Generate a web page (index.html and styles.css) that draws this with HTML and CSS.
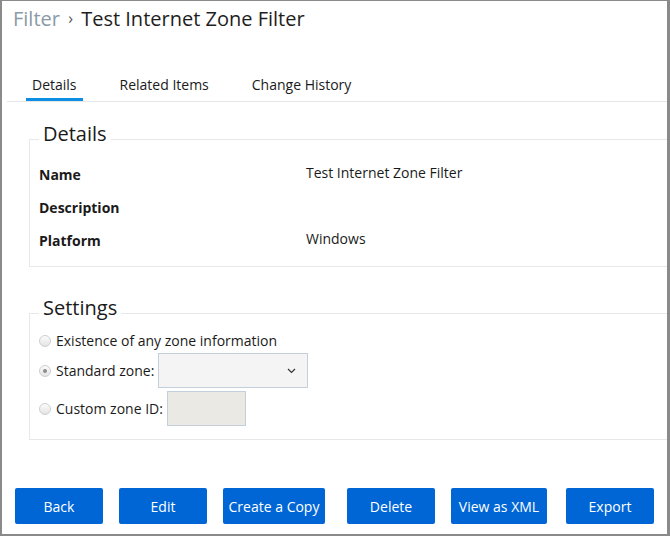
FILE: index.html
```html
<!DOCTYPE html>
<html>
<head>
<meta charset="utf-8">
<link rel="stylesheet" href="styles.css">
</head>
<body>
<div class="frame">
  <header class="page-head">
    <span class="crumb">Filter</span>
    <span class="sep">›</span>
    <span class="title">Test Internet Zone Filter</span>
  </header>

  <nav class="tabs">
    <a class="tab active">Details</a>
    <a class="tab">Related Items</a>
    <a class="tab">Change History</a>
  </nav>

  <section class="group group-details">
    <div class="group-title">Details</div>
    <div class="props">
      <div class="prop-label">Name</div>
      <div class="prop-value">Test Internet Zone Filter</div>
      <div class="prop-label">Description</div>
      <div class="prop-value"></div>
      <div class="prop-label">Platform</div>
      <div class="prop-value">Windows</div>
    </div>
  </section>

  <section class="group group-settings">
    <div class="group-title">Settings</div>
    <div class="options">
      <label class="opt opt-first"><span class="radio"></span>Existence of any zone information</label>
      <label class="opt opt-select"><span class="radio checked"></span>Standard zone:<span class="select"><svg class="chev" width="9" height="6" viewBox="0 0 9 6"><path d="M1 1 L4.5 4.5 L8 1" fill="none" stroke="#333" stroke-width="1.2"/></svg></span></label>
      <label class="opt opt-input"><span class="radio"></span>Custom zone ID:<span class="textbox"></span></label>
    </div>
  </section>

  <footer class="actions">
    <button class="btn">Back</button>
    <button class="btn">Edit</button>
    <button class="btn btn-wide">Create a Copy</button>
    <button class="btn btn-gap-l">Delete</button>
    <button class="btn btn-mid">View as XML</button>
    <button class="btn btn-gap-s">Export</button>
  </footer>
</div>
</body>
</html>
```

FILE: styles.css
```css
* { box-sizing: border-box; }
html, body { margin: 0; padding: 0; background: #fff; }
body {
  font-family: "Open Sans", "Noto Sans", sans-serif;
  font-size: 14px;
  color: #1a1a1a;
}
.frame {
  width: 670px;
  height: 536px;
  border-style: solid;
  border-color: #8a8a8a;
  border-width: 1px 3px 2px 2px;
  display: flex;
  flex-direction: column;
  overflow: hidden;
}
.page-head {
  padding: 4px 0 0 11px;
  font-size: 20px;
  line-height: 28px;
  white-space: nowrap;
}
.crumb { color: #8b9aa6; }
.sep { color: #555; font-size: 16px; margin: 0 3px 0 3px; position: relative; top: -2px; }
.title { color: #1e1e1e; }

.tabs {
  margin: 41px 0 0 5px;
  padding-left: 19px;
  display: flex;
  gap: 31px;
  border-bottom: 1px solid #e6e6e6;
}
.tab {
  display: block;
  padding: 0 6px 3px;
  line-height: 20px;
  color: #1a1a1a;
  border-bottom: 3px solid transparent;
}
.tab.active { border-bottom-color: #0d8de3; }

.group {
  margin-left: 27px;
  border: 1px solid #e6e8ea;
  border-right: none;
}
.group-details { margin-top: 37px; }
.group-settings { margin-top: 46px; }
.group-title {
  width: fit-content;
  margin: -16px 0 0 9px;
  padding: 0 4px;
  background: #fff;
  font-size: 20px;
  line-height: 20px;
  color: #1a1a1a;
}
.props {
  display: grid;
  grid-template-columns: 267px 1fr;
  row-gap: 13px;
  padding: 19px 0 17px 9px;
}
.prop-label {
  font-weight: bold;
  line-height: 20px;
  margin-top: 2px;
  margin-bottom: -2px;
}
.prop-value { line-height: 20px; }

.options {
  padding: 13px 0 13px 9px;
  display: flex;
  flex-direction: column;
}
.opt {
  display: flex;
  align-items: center;
  line-height: 20px;
  white-space: nowrap;
}
.opt-select { margin-top: 2px; }
.opt-input { margin-top: 3px; }
.radio {
  width: 12px;
  height: 12px;
  border-radius: 50%;
  border: 1px solid #cfcfcf;
  background: linear-gradient(#fbfbfb, #e4e4e4);
  margin-right: 5px;
  position: relative;
  flex: none;
}
.radio.checked::after {
  content: "";
  position: absolute;
  left: 3px;
  top: 3px;
  width: 4px;
  height: 4px;
  border-radius: 50%;
  background: #8d8d8d;
}
.select {
  width: 150px;
  height: 35px;
  margin-left: 4px;
  border: 1px solid #c3cfdb;
  background: #f4f4f4;
  display: flex;
  align-items: center;
  justify-content: flex-end;
  padding-right: 11px;
}
.chev { display: block; }
.textbox {
  width: 79px;
  height: 35px;
  margin-left: 4px;
  border: 1px solid #c3cfdb;
  background: #ebe9e3;
}

.actions {
  margin-top: auto;
  padding: 0 0 10px 13px;
  display: flex;
  gap: 16px;
}
.btn {
  font-family: inherit;
  font-size: 14px;
  color: #fff;
  background: #0066d6;
  border: none;
  border-radius: 2px;
  height: 36px;
  width: 88px;
  padding: 0;
}
.btn-wide { width: 102px; }
.btn-mid { width: 96px; }
.btn-gap-l { margin-left: 6px; }
.btn-gap-s { margin-left: 3px; }
```
